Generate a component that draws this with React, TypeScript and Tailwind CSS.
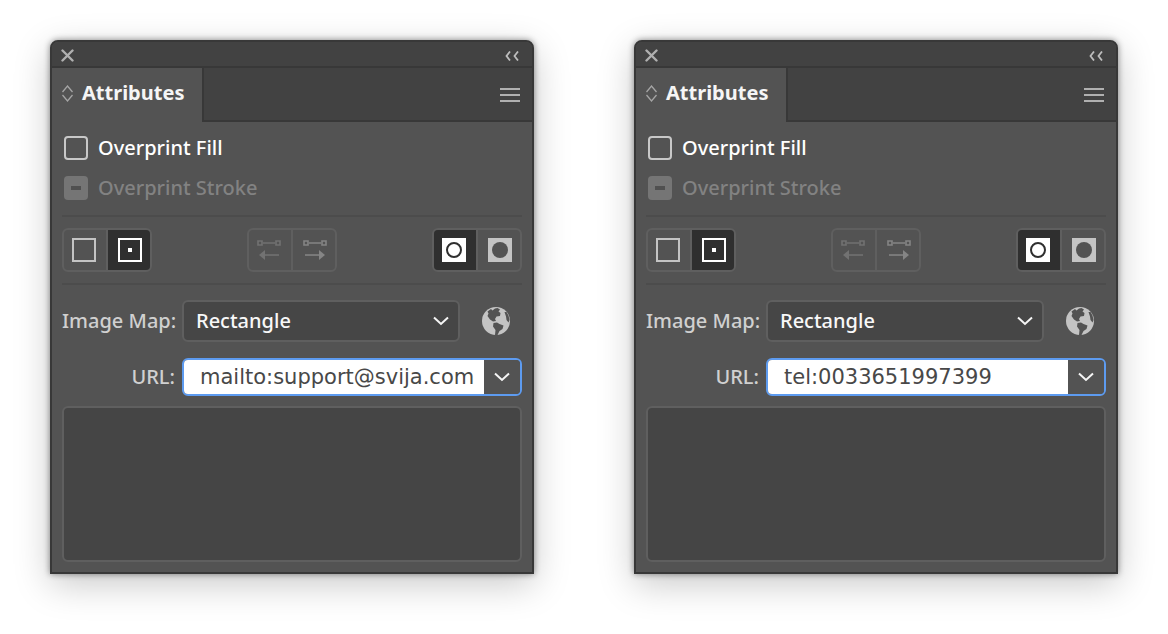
import { useId, useState } from "react";
import type { ReactNode } from "react";

interface ToggleProps {
  label: string;
  active?: boolean;
  disabled?: boolean;
  onClick?: () => void;
  children: ReactNode;
}

const Toggle = ({ label, active, disabled, onClick, children }: ToggleProps) => (
  <button
    type="button"
    aria-label={label}
    aria-pressed={active}
    disabled={disabled}
    onClick={onClick}
    className={`grid flex-1 place-items-center first:pr-0.5 last:pl-0.5 ${active ? "bg-[#2f2f2f]" : ""}`}
  >
    {children}
  </button>
);

const ToggleGroup = ({ children }: { children: ReactNode }) => (
  <div className="flex h-11 w-[90px] divide-x-2 divide-[#5f5f5f] overflow-hidden rounded-md border-2 border-[#5f5f5f]">
    {children}
  </div>
);

const Chevron = () => (
  <svg width="16" height="10" viewBox="0 0 16 10" fill="none" stroke="#f5f5f5" strokeWidth="2">
    <path d="M1 1.5 8 8l7-6.5" />
  </svg>
);

const Globe = () => (
  <svg width="28" height="28" viewBox="0 0 28 28">
    <circle cx="14" cy="14" r="14" fill="#c4c4c4" />
    <g fill="#535353">
      <path d="M5.5 4.5 9 2 10.5 3.5 13 1.5 15.5 1 18 2.5 16.5 4.5 18.5 6 18 9 14.5 9.5 13 12 14 14 11 14.5 8 12.5 5.5 9 6.5 6.5z" />
      <path d="M11.5 16 15 15.5 17.5 17 21.5 18.5 20.5 22 17.5 24 15.5 28 13 28 13.5 23 11 19.5z" />
      <path d="M22.5 5 24.5 5 26.5 8.5 27.5 13 26.5 15.5 24.5 13 24 9.5z" />
    </g>
  </svg>
);

// Two anchor points joined by a segment, with a direction arrow below
const PathDirection = ({ reversed }: { reversed?: boolean }) => (
  <svg width="24" height="22" viewBox="0 0 24 22" fill="none" stroke={reversed ? "#727272" : "#858585"} strokeWidth="1.6">
    <path d="M1 2h4v4H1zM19 2h4v4h-4zM6 4h12" />
    {reversed ? <path d="M22 16H7" /> : <path d="M2 16h15" />}
    <path d={reversed ? "M2 16l6-5v10z" : "M22 16l-6-5v10z"} fill={reversed ? "#727272" : "#858585"} stroke="none" />
  </svg>
);

const AttributesPanel = ({ url }: { url: string }) => {
  const id = useId();
  const [center, setCenter] = useState(true);
  const [evenOdd, setEvenOdd] = useState(false);

  return (
    <section className="min-w-0 flex-1 overflow-hidden rounded-t-lg border-2 border-[#383838] bg-[#535353] text-xl leading-6 shadow-[0_0_6px_rgba(0,0,0,0.45),0_10px_36px_rgba(0,0,0,0.22)]">
      <header className="flex h-[26px] items-center justify-between border-b-2 border-[#383838] bg-[#424242] pl-[9px] pr-[13px] pt-[3px]">
        <button type="button" aria-label="Close">
          <svg width="13" height="13" viewBox="0 0 13 13" stroke="#b0b0b0" strokeWidth="2.4" strokeLinecap="round">
            <path d="m1.5 1.5 10 10m0-10-10 10" />
          </svg>
        </button>
        <button type="button" aria-label="Collapse">
          <svg width="14" height="10" viewBox="0 0 14 10" fill="none" stroke="#bdbdbd" strokeWidth="1.8">
            <path d="M5 .5 1.5 5 5 9.5M13 .5 9.5 5 13 9.5" />
          </svg>
        </button>
      </header>

      <div className="flex h-[54px] bg-[#424242]">
        <div className="flex w-[150px] items-center gap-[9px] bg-[#535353] pb-1 pl-[10px]">
          <svg width="11" height="17" viewBox="0 0 11 17" fill="none" stroke="#a5a5a5" strokeWidth="1.3">
            <path d="M.5 7 5.5 1l5 6M.5 10l5 6 5-6" />
          </svg>
          <h2 className="font-bold text-[#f5f5f5]">Attributes</h2>
        </div>
        <div className="flex flex-1 items-center justify-end border-b-2 border-l-2 border-[#383838] pr-3 pt-0.5">
          <button type="button" aria-label="Panel menu">
            <svg width="20" height="14" viewBox="0 0 20 14" stroke="#b0b0b0" strokeWidth="2">
              <path d="M0 1h20M0 7h20M0 13h20" />
            </svg>
          </button>
        </div>
      </div>

      <div className="px-[10px] pb-[10px] pt-[14px] font-medium">
        <label className="flex items-center gap-[10px] pl-[2px] text-white">
          <input type="checkbox" className="size-6 appearance-none rounded-sm border-2 border-[#c8c8c8] checked:bg-[#c8c8c8]" />
          Overprint Fill
        </label>
        <label className="mt-4 flex items-center gap-[10px] pl-[2px] text-[#828282]">
          <span className="grid size-6">
            <input type="checkbox" disabled className="col-start-1 row-start-1 size-6 appearance-none rounded-sm bg-[#757575]" />
            <span className="col-start-1 row-start-1 h-1 w-[10px] place-self-center bg-[#505050]" />
          </span>
          Overprint Stroke
        </label>

        <div className="mt-[15px] flex justify-between border-y-2 border-[#4c4c4c] py-[11px]">
          <ToggleGroup>
            <Toggle label="Don't show center" active={!center} onClick={() => setCenter(false)}>
              <span className="size-6 border-2 border-[#c4c4c4]" />
            </Toggle>
            <Toggle label="Show center" active={center} onClick={() => setCenter(true)}>
              <span className="grid size-6 place-items-center border-2 border-white">
                <span className="size-1 bg-white" />
              </span>
            </Toggle>
          </ToggleGroup>
          <ToggleGroup>
            <Toggle label="Reverse path direction off" disabled>
              <PathDirection reversed />
            </Toggle>
            <Toggle label="Reverse path direction on" disabled>
              <PathDirection />
            </Toggle>
          </ToggleGroup>
          <ToggleGroup>
            <Toggle label="Non-zero winding fill rule" active={!evenOdd} onClick={() => setEvenOdd(false)}>
              <span className="grid size-6 place-items-center bg-white">
                <span className="size-4 rounded-full border-2 border-[#2f2f2f]" />
              </span>
            </Toggle>
            <Toggle label="Even-odd fill rule" active={evenOdd} onClick={() => setEvenOdd(true)}>
              <span className="grid size-6 place-items-center bg-[#c4c4c4]">
                <span className="size-4 rounded-full bg-[#535353]" />
              </span>
            </Toggle>
          </ToggleGroup>
        </div>

        <div className="mt-[15px] flex items-center">
          <label htmlFor={`${id}-map`} className="w-[120px] shrink-0 whitespace-nowrap pr-[7px] text-right text-[#d0d0d0]">
            Image Map:
          </label>
          <div className="relative flex-1">
            <select
              id={`${id}-map`}
              defaultValue="Rectangle"
              className="block h-[42px] w-full appearance-none rounded-md border-2 border-[#5f5f5f] bg-[#464646] px-3 text-[#f8f8f8]"
            >
              <option>None</option>
              <option>Rectangle</option>
              <option>Polygon</option>
            </select>
            <span className="pointer-events-none absolute inset-y-0 right-[11px] flex items-center">
              <Chevron />
            </span>
          </div>
          <button type="button" aria-label="Browser" className="ml-[22px] mr-3">
            <Globe />
          </button>
        </div>

        <div className="mt-4 flex items-center">
          <label htmlFor={`${id}-url`} className="w-[120px] shrink-0 whitespace-nowrap pr-[7px] text-right text-[#d0d0d0]">
            URL:
          </label>
          <div className="flex h-[38px] min-w-0 flex-1 overflow-hidden rounded-md border-2 border-[#5d9bf0]">
            <input
              id={`${id}-url`}
              type="text"
              defaultValue={url}
              className="min-w-0 flex-1 bg-white pl-4 font-['DejaVu_Sans',sans-serif] text-[21px] font-normal text-[#484848] outline-none"
            />
            <button type="button" aria-label="Recent URLs" className="grid w-9 place-items-center bg-[#535353]">
              <Chevron />
            </button>
          </div>
        </div>

        <textarea
          aria-label="Notes"
          className="mt-[10px] block h-[156px] w-full resize-none rounded-md border-2 border-[#5f5f5f] bg-[#454545] p-2 text-[#f5f5f5] outline-none"
        />
      </div>
    </section>
  );
};

export default function App() {
  return (
    <main className="flex min-h-screen items-start gap-[100px] bg-white px-[50px] py-10 font-['Noto_Sans',sans-serif]">
      <AttributesPanel url="mailto:support@svija.com" />
      <AttributesPanel url="tel:0033651997399" />
    </main>
  );
}
